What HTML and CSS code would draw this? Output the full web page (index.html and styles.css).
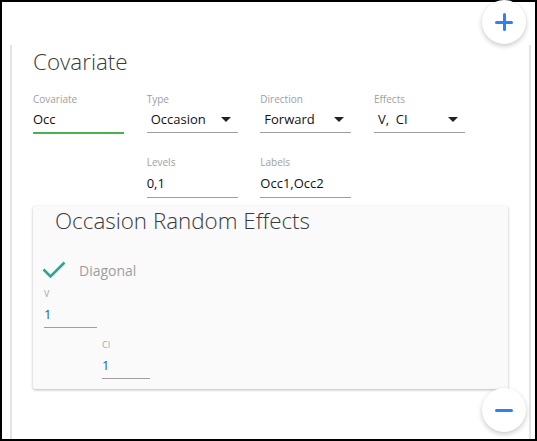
FILE: index.html
```html
<!DOCTYPE html>
<html>
<head>
<meta charset="utf-8">
<link rel="stylesheet" href="styles.css">
</head>
<body>
<div class="frame">
  <div class="panel">
    <h1 class="title">Covariate</h1>
    <div class="grid">
      <div class="field">
        <span class="label">Covariate</span>
        <div class="value focused">Occ</div>
      </div>
      <div class="field">
        <span class="label">Type</span>
        <div class="value select"><span>Occasion</span><i class="arrow"></i></div>
      </div>
      <div class="field">
        <span class="label">Direction</span>
        <div class="value select"><span>Forward</span><i class="arrow"></i></div>
      </div>
      <div class="field">
        <span class="label">Effects</span>
        <div class="value select"><span>V,&nbsp; CI</span><i class="arrow"></i></div>
      </div>
      <div class="field col2 row2">
        <span class="label">Levels</span>
        <div class="value">0,1</div>
      </div>
      <div class="field row2">
        <span class="label">Labels</span>
        <div class="value">Occ1,Occ2</div>
      </div>
    </div>
    <div class="card">
      <h2 class="card-title">Occasion Random Effects</h2>
      <div class="check-row">
        <svg class="check" width="24" height="18" viewBox="0 0 24 18"><path d="M1.5 8.5 L8.5 15.5 L22.5 1.5" fill="none" stroke="#2aa596" stroke-width="2.6"/></svg>
        <span class="check-label">Diagonal</span>
      </div>
      <div class="small-field v">
        <span class="small-label">V</span>
        <div class="small-value">1</div>
      </div>
      <div class="small-field ci">
        <span class="small-label">CI</span>
        <div class="small-value">1</div>
      </div>
    </div>
  </div>
  <button class="fab plus" aria-label="add"><span class="bar h"></span><span class="bar vbar"></span></button>
  <button class="fab minus" aria-label="remove"><span class="bar h"></span></button>
</div>
</body>
</html>
```
FILE: styles.css
```css
* { box-sizing: border-box; }
html, body { margin: 0; padding: 0; }
body {
  width: 537px;
  height: 441px;
  overflow: hidden;
  background: #fff;
  font-family: "Open Sans", "Liberation Sans", sans-serif;
  color: #212121;
}
.frame {
  position: relative;
  width: 537px;
  height: 441px;
  border: 2px solid #000;
  display: flex;
  flex-direction: column;
}
.panel {
  flex: 1;
  margin: 43px 4px 0 8px;
  border-left: 2px solid #e4e4e4;
  border-right: 2px solid #e4e4e4;
  padding: 2px 21px 0 21px;
}
.title {
  margin: 0;
  font-weight: 300;
  font-size: 22.4px;
  line-height: 30px;
  color: #3a3a3a;
}
.grid {
  display: grid;
  grid-template-columns: repeat(4, 91px);
  column-gap: 22.67px;
  row-gap: 21px;
  margin-top: 15px;
}
.field { display: flex; flex-direction: column; }
.col2 { grid-column: 2; }
.label {
  font-size: 10px;
  line-height: 14px;
  color: #9e9e9e;
}
.value {
  font-size: 13px;
  line-height: 17px;
  padding: 5px 0 4px;
  border-bottom: 1px solid #9e9e9e;
  color: #111;
  white-space: nowrap;
}
.row2 .value { padding-top: 6px; padding-bottom: 5px; }
.value.focused {
  border-bottom: 2px solid #4caf50;
}
.value.select {
  display: flex;
  align-items: center;
  justify-content: space-between;
  padding-left: 4px;
  padding-right: 7px;
}
.arrow {
  width: 0;
  height: 0;
  border-left: 5px solid transparent;
  border-right: 5px solid transparent;
  border-top: 5px solid #222;
}
.card {
  margin-top: 8px;
  background: #fafafa;
  box-shadow: 0 1px 3px rgba(0,0,0,0.28);
  border-radius: 2px;
  height: 183px;
  padding: 0 11px 0 9px;
}
.card-title {
  margin: 0 0 0 13px;
  font-weight: 300;
  font-size: 22.4px;
  line-height: 30px;
  color: #3a3a3a;
}
.check-row {
  display: flex;
  align-items: center;
  height: 20px;
  margin-top: 24px;
}
.check { flex: none; }
.check-label {
  margin-left: 13px;
  font-size: 14px;
  color: #9e9e9e;
}
.small-field { display: flex; flex-direction: column; }
.small-field.v { width: 53px; margin-left: 2px; margin-top: 8px; }
.small-field.ci { width: 48px; margin-left: 60px; margin-top: 11px; }
.small-label {
  font-size: 9px;
  line-height: 12px;
  color: #a6a6a6;
}
.small-value {
  font-size: 13px;
  line-height: 18px;
  padding: 5px 0 4px;
  color: #1a5dab;
  border-bottom: 1px solid #9e9e9e;
}
.fab {
  position: absolute;
  left: 480px;
  width: 44px;
  height: 44px;
  border: none;
  border-radius: 50%;
  background: #fff;
  box-shadow: 0 2px 5px rgba(0,0,0,0.22);
  padding: 0;
}
.fab.plus { top: -2px; }
.fab.minus { top: 386px; }
.bar {
  position: absolute;
  background: #2f7ff5;
  border-radius: 1.5px;
}
.bar.h { width: 18px; height: 3px; left: 13px; top: 20.5px; }
.bar.vbar { width: 3px; height: 18px; left: 20.5px; top: 13px; }
```
